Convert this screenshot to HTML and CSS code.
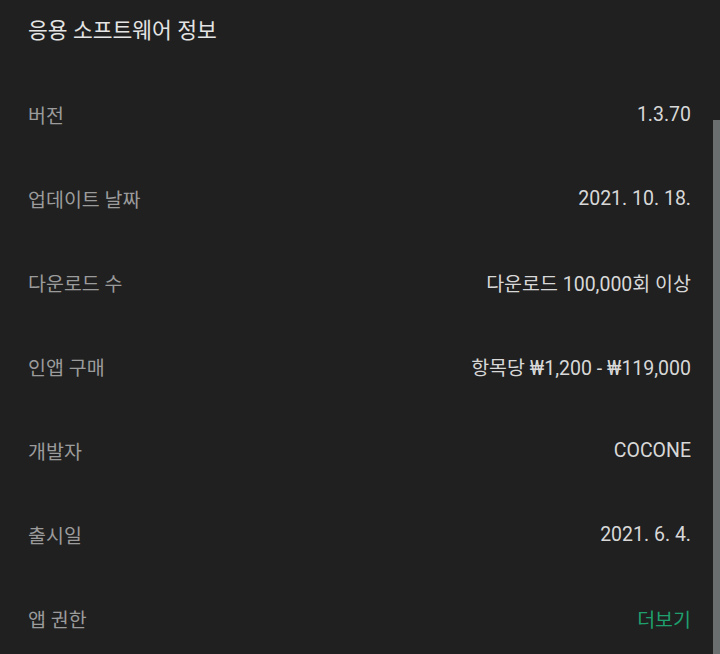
FILE: index.html
```html
<!DOCTYPE html>
<html lang="ko">
<head>
  <meta charset="UTF-8" />
  <meta name="viewport" content="width=device-width, initial-scale=1.0"/>
  <title>응용 소프트웨어 정보</title>
  <link rel="stylesheet" href="styles.css">
</head>
<body>

<div id="info-page">
  <div class="title">응용 소프트웨어 정보</div>

  <div class="row">
    <div class="label">버전</div>
    <div class="value">1.3.70</div>
  </div>
  <div class="row">
    <div class="label">업데이트 날짜</div>
    <div class="value">2021. 10. 18.</div>
  </div>
  <div class="row">
    <div class="label">다운로드 수</div>
    <div class="value">다운로드 100,000회 이상</div>
  </div>
  <div class="row">
    <div class="label">인앱 구매</div>
    <div class="value">항목당 ₩1,200 - ₩119,000</div>
  </div>
  <div class="row">
    <div class="label">개발자</div>
    <div class="value">COCONE</div>
  </div>
  <div class="row">
    <div class="label">출시일</div>
    <div class="value">2021. 6. 4.</div>
  </div>
  <div class="row">
    <div class="label">앱 권한</div>
    <div class="value link">더보기</div>
  </div>

  <div class="scrollbar"></div>
</div>

</body>
</html>
```

FILE: styles.css
```css
html, body {
  margin: 0;
  height: 100%;
  background: #202020;
  overflow: hidden;
}

body {
  font-family: Roboto, "Noto Sans CJK KR", sans-serif;
  color: #dcdcdc;
}

#info-page {
  position: relative;
  height: 100%;
  padding: 0 29px 0 28px;
}

.title {
  height: 62px;
  line-height: 62px;
  font-size: 21.5px;
  color: #e4e4e4;
  margin-bottom: 10px;
}

.row {
  height: 84px;
  display: flex;
  justify-content: space-between;
  align-items: center;
  font-size: 19.5px;
}

.label {
  color: #9b9b9b;
}

.value {
  color: #d8d8d8;
}

.value.link {
  color: #1e9f6d;
}

.scrollbar {
  position: absolute;
  top: 120px;
  right: 0;
  bottom: 0;
  width: 7px;
  background: #6b6e6f;
}
```
